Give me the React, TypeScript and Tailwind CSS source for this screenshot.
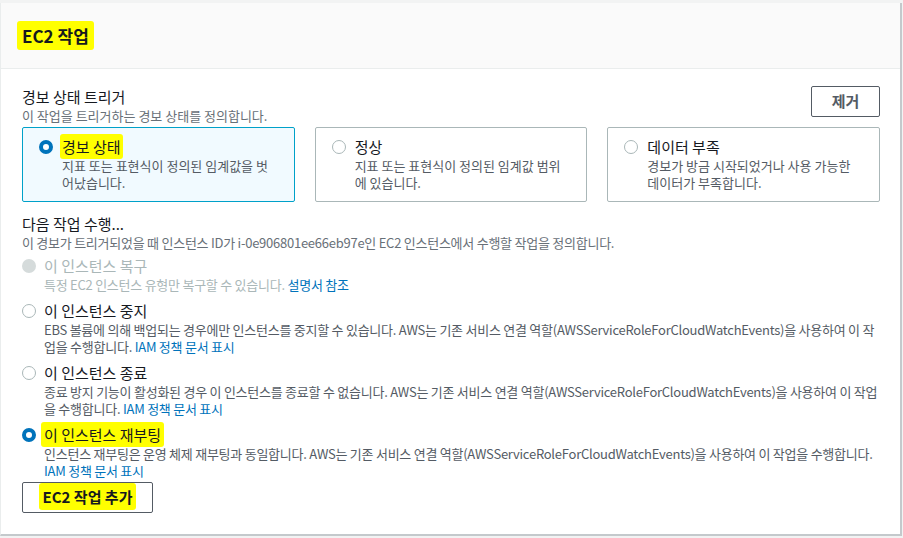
import type { ReactNode } from "react";

const font = "font-['Noto_Sans_CJK_KR','Noto_Sans',sans-serif]";

type Tile = { id: string; label: string; lines: string[]; checked?: boolean };

const tiles: Tile[] = [
  { id: "alarm", label: "경보 상태", lines: ["지표 또는 표현식이 정의된 임계값을 벗", "어났습니다."], checked: true },
  { id: "ok", label: "정상", lines: ["지표 또는 표현식이 정의된 임계값 범위", "에 있습니다."] },
  { id: "insufficient", label: "데이터 부족", lines: ["경보가 방금 시작되었거나 사용 가능한", "데이터가 부족합니다."] }
];

const role = "AWS는 기존 서비스 연결 역할(AWSServiceRoleForCloudWatchEvents)을 사용하여 이 작";

function Radio({ checked, disabled }: { checked?: boolean; disabled?: boolean }) {
  if (disabled) return <span className="block size-[14px] shrink-0 rounded-full bg-[#d5dbdb]" />;
  if (checked) return <span className="block size-[14px] shrink-0 rounded-full border-[4px] border-[#0073bb] bg-white" />;
  return <span className="block size-[14px] shrink-0 rounded-full border-[1.5px] border-[#aab7b8] bg-white" />;
}

function Mark({ children, className = "" }: { children: ReactNode; className?: string }) {
  return <span className={`rounded-[3px] bg-[#ffff00] ${className}`}>{children}</span>;
}

function Link({ children }: { children: ReactNode }) {
  return <span className="text-[#0073bb]">{children}</span>;
}

function ActionOption({
  label,
  checked,
  disabled,
  highlight,
  children
}: {
  label: string;
  checked?: boolean;
  disabled?: boolean;
  highlight?: boolean;
  children: ReactNode;
}) {
  return (
    <div className="flex gap-[8px]">
      <div className="flex h-[20px] items-center">
        <Radio checked={checked} disabled={disabled} />
      </div>
      <div className="min-w-0">
        <div className={`text-[15px] leading-[20px] ${disabled ? "text-[#aab7b8]" : "text-[#16191f]"}`}>
          {highlight ? <Mark className="-mx-[3px] px-[3px] py-[2px]">{label}</Mark> : label}
        </div>
        <div className={`text-[13px] leading-[17px] tracking-[-0.25px] ${disabled ? "text-[#aab7b8]" : "text-[#545b64]"}`}>
          {children}
        </div>
      </div>
    </div>
  );
}

export default function App() {
  return (
    <div className={`${font} h-[538px] w-[903px] overflow-hidden bg-[#f2f3f3] pt-[3px]`}>
      <section className="h-[533px] w-[902px] border-l border-r-2 border-b-2 border-l-[#eaeded] border-r-[#c4c9cc] border-b-[#c4c9cc] bg-white">
        <header className="flex h-[66px] items-center border-b border-[#eaeded] bg-[#fafafa] px-[21px]">
          <h2 className="text-[17px] font-bold leading-[22px] text-[#16191f]">
            <Mark className="-mx-[5px] px-[5px] py-[2px]">EC2 작업</Mark>
          </h2>
        </header>

        <div className="pl-[21px] pr-[20px] pt-[18px]">
          <div className="flex items-start justify-between">
            <div>
              <h3 className="text-[15px] leading-[20px] text-[#16191f]">경보 상태 트리거</h3>
              <p className="text-[13px] leading-[17px] text-[#687078]">이 작업을 트리거하는 경보 상태를 정의합니다.</p>
            </div>
            <button className="mt-[-1px] h-[31px] w-[69px] rounded-[2px] border border-[#545b64] bg-white text-[15px] font-bold text-[#545b64]">
              제거
            </button>
          </div>

          <div className="mt-[3px] grid grid-cols-3 gap-[20px]">
            {tiles.map((tile) => (
              <div
                key={tile.id}
                className={`flex h-[75px] gap-[9px] rounded-[2px] border px-[16px] pt-[9px] ${
                  tile.checked ? "border-[#00a1c9] bg-[#f1faff]" : "border-[#aab7b8] bg-white"
                }`}
              >
                <div className="flex h-[20px] items-center">
                  <Radio checked={tile.checked} />
                </div>
                <div>
                  <div className="text-[15px] leading-[20px] text-[#16191f]">
                    {tile.checked ? <Mark className="-mx-[2px] px-[2px] py-[2px]">{tile.label}</Mark> : tile.label}
                  </div>
                  <div className="text-[13px] leading-[17px] text-[#545b64]">
                    {tile.lines.map((line) => (
                      <div key={line} className="whitespace-nowrap">{line}</div>
                    ))}
                  </div>
                </div>
              </div>
            ))}
          </div>

          <h3 className="mt-[12px] text-[15px] leading-[20px] text-[#16191f]">다음 작업 수행...</h3>
          <p className="text-[13px] leading-[17px] tracking-[-0.25px] text-[#687078]">
            이 경보가 트리거되었을 때 인스턴스 ID가 i-0e906801ee66eb97e인 EC2 인스턴스에서 수행할 작업을 정의합니다.
          </p>

          <div className="mt-[5px] flex flex-col gap-[8px]">
            <ActionOption label="이 인스턴스 복구" disabled>
              특정 EC2 인스턴스 유형만 복구할 수 있습니다. <Link>설명서 참조</Link>
            </ActionOption>
            <ActionOption label="이 인스턴스 중지">
              <div className="whitespace-nowrap">EBS 볼륨에 의해 백업되는 경우에만 인스턴스를 중지할 수 있습니다. {role}</div>
              <div>업을 수행합니다. <Link>IAM 정책 문서 표시</Link></div>
            </ActionOption>
            <ActionOption label="이 인스턴스 종료">
              <div className="whitespace-nowrap">종료 방지 기능이 활성화된 경우 이 인스턴스를 종료할 수 없습니다. {role}업</div>
              <div>을 수행합니다. <Link>IAM 정책 문서 표시</Link></div>
            </ActionOption>
            <ActionOption label="이 인스턴스 재부팅" checked highlight>
              <div className="whitespace-nowrap">
                인스턴스 재부팅은 운영 체제 재부팅과 동일합니다. AWS는 기존 서비스 연결 역할(AWSServiceRoleForCloudWatchEvents)을 사용하여 이 작업을 수행합니다.
              </div>
              <div><Link>IAM 정책 문서 표시</Link></div>
            </ActionOption>
          </div>

          <button className="mt-[3px] h-[31px] w-[131px] rounded-[2px] border border-[#545b64] bg-white text-[15px] font-bold text-[#16191f]">
            <Mark className="px-[4px] py-[3px]">EC2 작업 추가</Mark>
          </button>
        </div>
      </section>
    </div>
  );
}
